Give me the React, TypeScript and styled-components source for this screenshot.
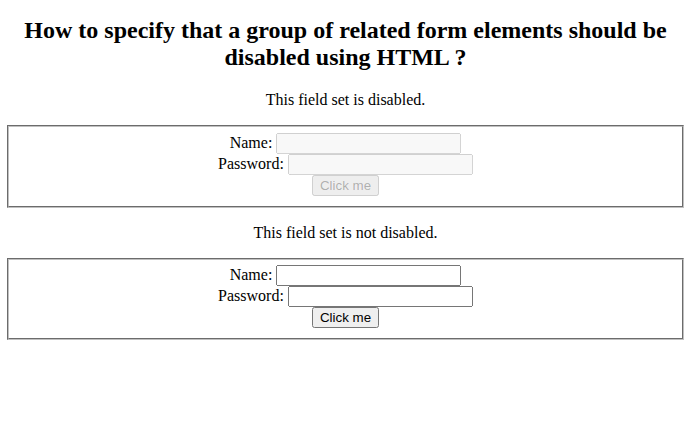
import React from "react";
import styled, { createGlobalStyle } from "styled-components";

const Global = createGlobalStyle`
  body {
    margin: 7px;
    font-family: "Liberation Serif", "Times New Roman", serif;
    font-size: 16px;
    color: #000;
    background: #fff;
  }
`;

const Page = styled.div`
  text-align: center;
`;

const Title = styled.h1`
  font-size: 24px;
  font-weight: bold;
  line-height: 27px;
  margin: 10px 0 20px;
`;

const Note = styled.p`
  margin: 16px 0 16px;
  line-height: 18px;
`;

const Group = styled.fieldset`
  margin: 0;
  border: 2px groove #c0c0c0;
  padding: 5.5px 12px 10px;
  text-align: center;
`;

const Label = styled.span``;

const Field = styled.input`
  font-family: "Liberation Sans", Arial, sans-serif;
  font-size: 13.33px;
`;

const Button = styled.button`
  font-family: "Liberation Sans", Arial, sans-serif;
  font-size: 13.33px;
`;

function Form({ disabled }: { disabled?: boolean }) {
  return (
    <Group disabled={disabled}>
      <Label>Name: </Label>
      <Field type="text" />
      <br />
      <Label>Password: </Label>
      <Field type="password" />
      <br />
      <Button type="button">Click me</Button>
    </Group>
  );
}

export default function App() {
  return (
    <Page>
      <Global />
      <Title>
        How to specify that a group of related form elements should be
        disabled using HTML ?
      </Title>
      <Note>This field set is disabled.</Note>
      <Form disabled />
      <Note>This field set is not disabled.</Note>
      <Form />
    </Page>
  );
}
